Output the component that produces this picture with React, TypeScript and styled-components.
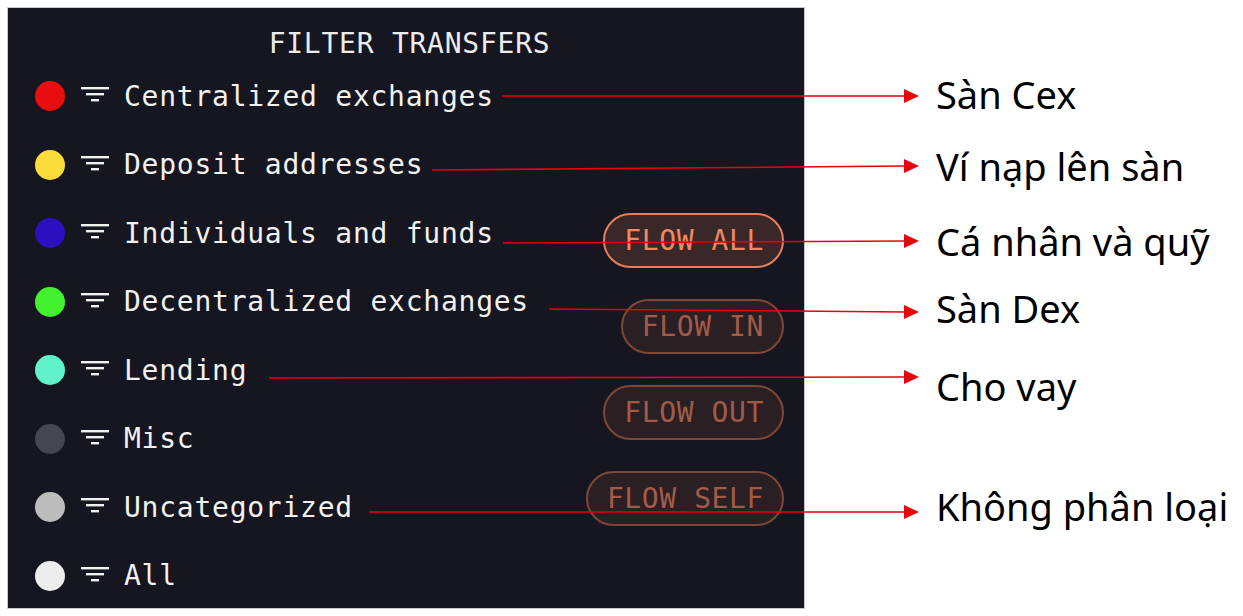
import styled, { createGlobalStyle } from "styled-components";

const GlobalStyle = createGlobalStyle`
  html, body {
    margin: 0;
    padding: 0;
    background: #ffffff;
  }
  body {
    width: 1243px;
    height: 616px;
    overflow: hidden;
  }
`;

const Page = styled.div`
  position: relative;
  width: 1243px;
  height: 616px;
  padding: 7px;
  box-sizing: border-box;
`;

const Panel = styled.section`
  width: 798px;
  height: 602px;
  box-sizing: border-box;
  background: #15161f;
  border: 1px solid #c8c8c8;
  padding: 17px 20px 0 27px;
  display: grid;
  grid-template-columns: 1fr auto;
  grid-template-rows: 37px 1fr;
  font-family: "DejaVu Sans Mono", "Liberation Mono", monospace;
`;

const Title = styled.h2`
  grid-column: 1 / 3;
  margin: 0;
  text-align: center;
  font-size: 28px;
  font-weight: 400;
  letter-spacing: 0.75px;
  line-height: 37px;
  color: #ececec;
`;

const List = styled.ul`
  list-style: none;
  margin: 0;
  padding: 0;
  display: grid;
  grid-auto-rows: 68.5px;
`;

const Row = styled.li`
  display: flex;
  align-items: center;
`;

const Dot = styled.span<{ $color: string }>`
  width: 30px;
  height: 30px;
  border-radius: 50%;
  background: ${(p) => p.$color};
  flex-shrink: 0;
`;

const FilterIcon = styled.svg`
  width: 28px;
  height: 20px;
  margin: -4px 15px 0 16px;
  flex-shrink: 0;
`;

const Label = styled.span`
  font-size: 28px;
  letter-spacing: 0.75px;
  color: #f1f1f1;
  white-space: nowrap;
`;

const Flows = styled.div`
  display: flex;
  flex-direction: column;
  align-items: flex-end;
  gap: 31px;
  padding-top: 151px;
`;

const FlowButton = styled.button<{ $active?: boolean }>`
  height: 55px;
  box-sizing: border-box;
  padding: 0 18px 0 19px;
  border-radius: 28px;
  border: 2px solid ${(p) => (p.$active ? "#e3805f" : "#7e4738")};
  background: ${(p) => (p.$active ? "#3a2727" : "#2a1f22")};
  color: ${(p) => (p.$active ? "#f08864" : "#a15b48")};
  font-family: "DejaVu Sans Mono", "Liberation Mono", monospace;
  font-size: 28px;
  letter-spacing: 0.6px;
  line-height: 1;
  cursor: pointer;
`;

const Callouts = styled.svg`
  position: absolute;
  left: 0;
  top: 0;
  width: 1243px;
  height: 616px;
  pointer-events: none;
`;

const Note = styled.span<{ $top: number }>`
  position: absolute;
  left: 936px;
  top: ${(p) => p.$top}px;
  font-family: "Noto Sans", "Open Sans", sans-serif;
  font-size: 38px;
  line-height: 38px;
  color: #000000;
  white-space: nowrap;
`;

const categories = [
  { label: "Centralized exchanges", color: "#ea0d0d" },
  { label: "Deposit addresses", color: "#fbdc3a" },
  { label: "Individuals and funds", color: "#2c0fbf" },
  { label: "Decentralized exchanges", color: "#42f22f" },
  { label: "Lending", color: "#5ff2cb" },
  { label: "Misc", color: "#45464f" },
  { label: "Uncategorized", color: "#bcbcbc" },
  { label: "All", color: "#ececec" },
];

const flows = [
  { label: "FLOW ALL", active: true },
  { label: "FLOW IN" },
  { label: "FLOW OUT" },
  { label: "FLOW SELF" },
];

const arrows = [
  { x1: 502, y1: 96, y2: 96 },
  { x1: 432, y1: 170, y2: 166 },
  { x1: 503, y1: 243, y2: 241 },
  { x1: 549, y1: 309, y2: 312 },
  { x1: 269, y1: 378, y2: 377 },
  { x1: 369, y1: 512, y2: 512 },
];

const notes = [
  { text: "Sàn Cex", top: 75 },
  { text: "Ví nạp lên sàn", top: 147 },
  { text: "Cá nhân và quỹ", top: 222 },
  { text: "Sàn Dex", top: 289 },
  { text: "Cho vay", top: 367 },
  { text: "Không phân loại", top: 487 },
];

const Filter = () => (
  <FilterIcon viewBox="0 0 28 20">
    <rect x="0" y="3" width="28" height="2.4" fill="#f1f1f1" />
    <rect x="5" y="9" width="18" height="2.4" fill="#f1f1f1" />
    <rect x="10" y="15" width="8" height="2.4" fill="#f1f1f1" />
  </FilterIcon>
);

export default function App() {
  return (
    <>
      <GlobalStyle />
      <Page>
        <Panel>
          <Title>FILTER TRANSFERS</Title>
          <List>
            {categories.map((c) => (
              <Row key={c.label}>
                <Dot $color={c.color} />
                <Filter />
                <Label>{c.label}</Label>
              </Row>
            ))}
          </List>
          <Flows>
            {flows.map((f) => (
              <FlowButton key={f.label} $active={f.active}>
                {f.label}
              </FlowButton>
            ))}
          </Flows>
        </Panel>

        {/* annotation arrows drawn over the panel */}
        <Callouts viewBox="0 0 1243 616">
          {arrows.map((a, i) => (
            <g key={i}>
              <line
                x1={a.x1}
                y1={a.y1}
                x2={906}
                y2={a.y2}
                stroke="#e8000b"
                strokeWidth="1.6"
              />
              <polygon
                points={`904,${a.y2 - 7} 919,${a.y2} 904,${a.y2 + 7}`}
                fill="#e8000b"
              />
            </g>
          ))}
        </Callouts>
        {notes.map((n) => (
          <Note key={n.text} $top={n.top}>
            {n.text}
          </Note>
        ))}
      </Page>
    </>
  );
}
